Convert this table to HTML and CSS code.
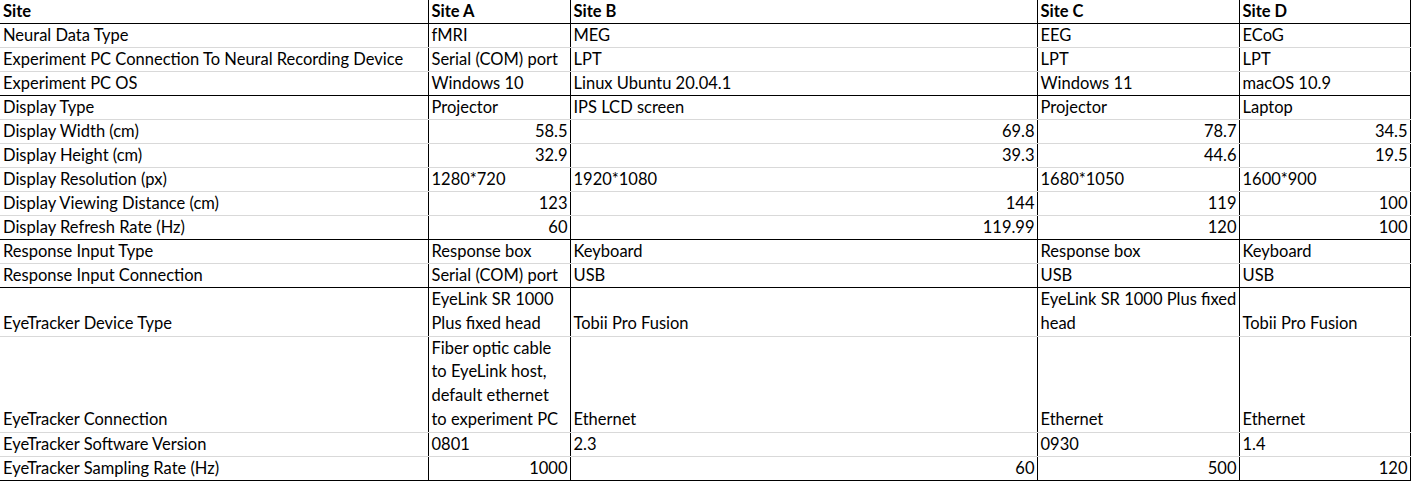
FILE: index.html
```html
<!DOCTYPE html>
<html>
<head>
<meta charset="utf-8">
<link rel="stylesheet" href="styles.css">
</head>
<body>
<table class="sheet">
<colgroup>
<col class="c-label"><col class="c-a"><col class="c-b"><col class="c-c"><col class="c-d">
</colgroup>
<tr class="head sec-end">
<td>Site</td><td class="v">Site A</td><td class="v">Site B</td><td class="v">Site C</td><td class="v last">Site D</td>
</tr>
<tr>
<td>Neural Data Type</td><td class="v">fMRI</td><td class="v">MEG</td><td class="v">EEG</td><td class="v last">ECoG</td>
</tr>
<tr>
<td>Experiment PC Connection To Neural Recording Device</td><td class="v">Serial (COM) port</td><td class="v">LPT</td><td class="v">LPT</td><td class="v last">LPT</td>
</tr>
<tr class="sec-end">
<td>Experiment PC OS</td><td class="v">Windows 10</td><td class="v">Linux Ubuntu 20.04.1</td><td class="v">Windows 11</td><td class="v last">macOS 10.9</td>
</tr>
<tr>
<td>Display Type</td><td class="v">Projector</td><td class="v">IPS LCD screen</td><td class="v">Projector</td><td class="v last">Laptop</td>
</tr>
<tr>
<td>Display Width (cm)</td><td class="v num">58.5</td><td class="v num">69.8</td><td class="v num">78.7</td><td class="v last num">34.5</td>
</tr>
<tr>
<td>Display Height (cm)</td><td class="v num">32.9</td><td class="v num">39.3</td><td class="v num">44.6</td><td class="v last num">19.5</td>
</tr>
<tr>
<td>Display Resolution (px)</td><td class="v">1280*720</td><td class="v">1920*1080</td><td class="v">1680*1050</td><td class="v last">1600*900</td>
</tr>
<tr>
<td>Display Viewing Distance (cm)</td><td class="v num">123</td><td class="v num">144</td><td class="v num">119</td><td class="v last num">100</td>
</tr>
<tr class="sec-end">
<td>Display Refresh Rate (Hz)</td><td class="v num">60</td><td class="v num">119.99</td><td class="v num">120</td><td class="v last num">100</td>
</tr>
<tr>
<td>Response Input Type</td><td class="v">Response box</td><td class="v">Keyboard</td><td class="v">Response box</td><td class="v last">Keyboard</td>
</tr>
<tr class="sec-end">
<td>Response Input Connection</td><td class="v">Serial (COM) port</td><td class="v">USB</td><td class="v">USB</td><td class="v last">USB</td>
</tr>
<tr class="tall">
<td>EyeTracker Device Type</td><td class="v">EyeLink SR 1000<br>Plus fixed head</td><td class="v">Tobii Pro Fusion</td><td class="v">EyeLink SR 1000 Plus fixed<br>head</td><td class="v last">Tobii Pro Fusion</td>
</tr>
<tr class="tall">
<td>EyeTracker Connection</td><td class="v">Fiber optic cable<br>to EyeLink host,<br>default ethernet<br>to experiment PC</td><td class="v">Ethernet</td><td class="v">Ethernet</td><td class="v last">Ethernet</td>
</tr>
<tr>
<td>EyeTracker Software Version</td><td class="v">0801</td><td class="v">2.3</td><td class="v">0930</td><td class="v last">1.4</td>
</tr>
<tr class="sec-end">
<td>EyeTracker Sampling Rate (Hz)</td><td class="v num">1000</td><td class="v num">60</td><td class="v num">500</td><td class="v last num">120</td>
</tr>
</table>
</body>
</html>
```
FILE: styles.css
```css
html, body {
  margin: 0;
  padding: 0;
  background: #ffffff;
}
.sheet {
  border-collapse: collapse;
  table-layout: fixed;
  width: 1410px;
  font-family: "Lato", "Liberation Sans", sans-serif;
  font-size: 16.5px;
  color: #000;
}
.c-label { width: 428px; }
.c-a { width: 142px; }
.c-b { width: 467px; }
.c-c { width: 202px; }
.c-d { width: 171px; }
.sheet td {
  line-height: 23px;
  padding: 0 3px;
  vertical-align: bottom;
  white-space: nowrap;
  overflow: hidden;
  border-bottom: 1px solid #d9d9d9;
}
.sheet tr.tall td {
  line-height: 23.75px;
}
.sheet td.v {
  border-left: 1px solid #000;
}
.sheet td.last {
  border-right: 1px solid #000;
}
.sheet td.num {
  text-align: right;
  padding-right: 2px;
}
.sheet tr.sec-end td {
  border-bottom: 1px solid #000;
}
.sheet tr.head td {
  font-weight: bold;
  line-height: 23px;
}
```
